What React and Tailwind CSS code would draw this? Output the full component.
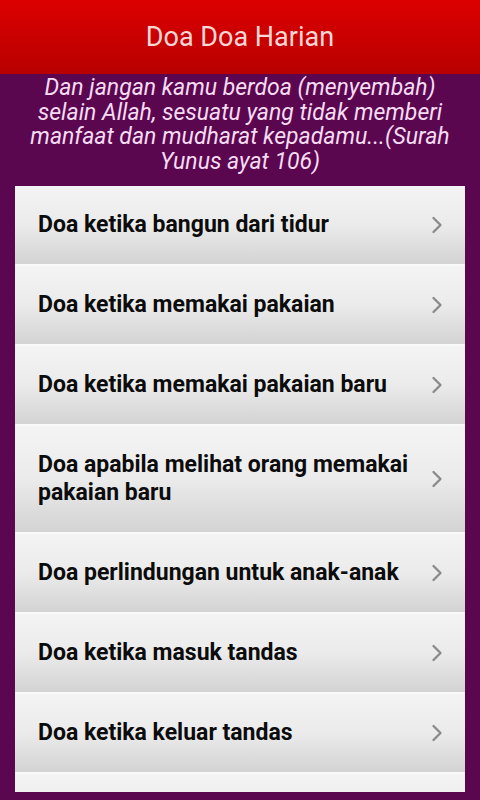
import { ChevronRight } from 'lucide-react'

const items = [
  'Doa ketika bangun dari tidur',
  'Doa ketika memakai pakaian',
  'Doa ketika memakai pakaian baru',
  'Doa apabila melihat orang memakai pakaian baru',
  'Doa perlindungan untuk anak-anak',
  'Doa ketika masuk tandas',
  'Doa ketika keluar tandas',
  'Doa ketika masuk rumah',
]

export default function App() {
  return (
    <div className="h-[800px] flex flex-col overflow-hidden bg-[#5a0750] font-['Roboto',sans-serif]">
      <header className="h-[74px] shrink-0 flex items-center justify-center bg-gradient-to-b from-[#dc0000] to-[#b80000]">
        <h1 className="text-[27px] text-[#fad8d8]">Doa Doa Harian</h1>
      </header>

      <p className="px-[8px] pt-[2px] pb-[12px] text-center italic text-[23px] leading-[24.5px] text-[#f6dcf2]">
        Dan jangan kamu berdoa (menyembah)
        <br />
        selain Allah, sesuatu yang tidak memberi
        <br />
        manfaat dan mudharat kepadamu...(Surah
        <br />
        Yunus ayat 106)
      </p>

      <div className="mx-[15px] mb-[8px] flex-1 min-h-0 overflow-hidden">
        <ul className="flex flex-col gap-[2px] bg-[#f9f9f9]">
          {items.map((t) => (
            <li
              key={t}
              className="py-[25px] pl-[23px] pr-[14px] flex items-center gap-2 bg-gradient-to-b from-[#f4f4f4] via-[#ebebeb] to-[#d3d3d3]"
            >
              <span className="flex-1 text-[23px] leading-[28px] font-bold text-[#0c0c0c]">{t}</span>
              <ChevronRight size={28} strokeWidth={2} className="text-[#8a8a8a] shrink-0" />
            </li>
          ))}
        </ul>
      </div>
    </div>
  )
}
